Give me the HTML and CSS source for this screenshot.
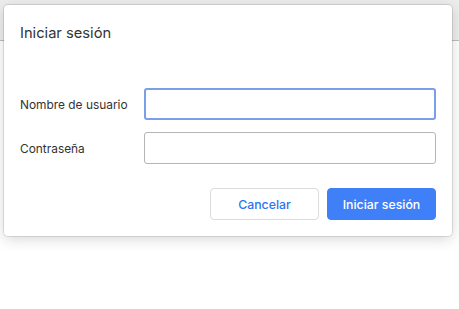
FILE: index.html
```html
<!DOCTYPE html>
<html lang="es">
<head>
<meta charset="utf-8">
<title>Iniciar sesión</title>
<link rel="stylesheet" href="styles.css">
</head>
<body>
<div class="page">
  <div class="toolbar"></div>
  <div class="content"></div>
  <div class="dialog" role="dialog" aria-labelledby="dlg-title">
    <h1 class="dialog-title" id="dlg-title">Iniciar sesión</h1>
    <form class="dialog-form">
      <div class="field">
        <label class="field-label" for="user">Nombre de usuario</label>
        <input class="field-input is-focused" id="user" type="text">
      </div>
      <div class="field">
        <label class="field-label" for="pass">Contraseña</label>
        <input class="field-input" id="pass" type="password">
      </div>
      <div class="actions">
        <button type="button" class="btn btn-secondary">Cancelar</button>
        <button type="submit" class="btn btn-primary">Iniciar sesión</button>
      </div>
    </form>
  </div>
</div>
</body>
</html>
```

FILE: styles.css
```css
html, body {
  margin: 0;
  padding: 0;
  background: #ffffff;
  font-family: Inter, "Noto Sans", "Liberation Sans", sans-serif;
  color: #333333;
}

.page {
  position: relative;
  width: 459px;
  height: 309px;
  overflow: hidden;
}

.toolbar {
  height: 40px;
  background: #ededed;
  border-bottom: 1px solid #bdbdbd;
}

.content {
  background: #ffffff;
}

.dialog {
  position: absolute;
  left: 4px;
  top: 5px;
  width: 448px;
  box-sizing: border-box;
  background: #ffffff;
  border-radius: 4px;
  box-shadow: 0 0 0 1px rgba(0, 0, 0, 0.1), 0 3px 14px rgba(0, 0, 0, 0.16);
  padding: 18px 16px 16px 16px;
}

.dialog-title {
  margin: 0;
  font-size: 14.7px;
  line-height: 20px;
  font-weight: 400;
  color: #333333;
}

.dialog-form {
  margin-top: 45px;
  display: flex;
  flex-direction: column;
  gap: 12px;
}

.field {
  display: flex;
  align-items: center;
}

.field-label {
  width: 124px;
  flex: none;
  font-size: 11.9px;
  color: #333333;
}

.field-input {
  flex: 1;
  height: 32px;
  box-sizing: border-box;
  margin: 0;
  border: 1px solid #b5b5b5;
  border-radius: 3px;
  background: #ffffff;
  font: inherit;
  outline: none;
}

.field-input.is-focused {
  border: 2px solid #7a9ee9;
}

.actions {
  display: flex;
  justify-content: flex-end;
  gap: 8px;
  margin-top: 12px;
}

.btn {
  width: 109px;
  height: 32px;
  box-sizing: border-box;
  border-radius: 4px;
  font-family: inherit;
  font-size: 12.3px;
  font-weight: 500;
  cursor: pointer;
}

.btn-secondary {
  background: #ffffff;
  border: 1px solid #dcdcdc;
  color: #2f74ef;
}

.btn-primary {
  background: #3f7ff7;
  border: 1px solid #3f7ff7;
  color: #ffffff;
}
```
